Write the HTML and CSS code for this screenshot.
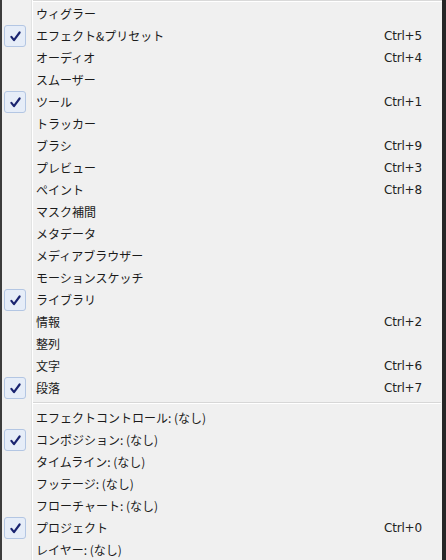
FILE: index.html
```html
<!DOCTYPE html>
<html lang="ja">
<head>
<meta charset="utf-8">
<title>ウィンドウ</title>
<link rel="stylesheet" href="styles.css">
</head>
<body>
<div class="menu">
  <div class="topline"></div>
  <div class="item"><span class="gut"></span><span class="label">ウィグラー</span><span class="key"></span></div>
  <div class="item checked"><span class="gut"><span class="chk"><svg viewBox="0 0 12 12"><path d="M2.2 6.3 L4.6 9.3 L9.8 2.3" /></svg></span></span><span class="label">エフェクト&amp;プリセット</span><span class="key">Ctrl+5</span></div>
  <div class="item"><span class="gut"></span><span class="label">オーディオ</span><span class="key">Ctrl+4</span></div>
  <div class="item"><span class="gut"></span><span class="label">スムーザー</span><span class="key"></span></div>
  <div class="item checked"><span class="gut"><span class="chk"><svg viewBox="0 0 12 12"><path d="M2.2 6.3 L4.6 9.3 L9.8 2.3" /></svg></span></span><span class="label">ツール</span><span class="key">Ctrl+1</span></div>
  <div class="item"><span class="gut"></span><span class="label">トラッカー</span><span class="key"></span></div>
  <div class="item"><span class="gut"></span><span class="label">ブラシ</span><span class="key">Ctrl+9</span></div>
  <div class="item"><span class="gut"></span><span class="label">プレビュー</span><span class="key">Ctrl+3</span></div>
  <div class="item"><span class="gut"></span><span class="label">ペイント</span><span class="key">Ctrl+8</span></div>
  <div class="item"><span class="gut"></span><span class="label">マスク補間</span><span class="key"></span></div>
  <div class="item"><span class="gut"></span><span class="label">メタデータ</span><span class="key"></span></div>
  <div class="item"><span class="gut"></span><span class="label">メディアブラウザー</span><span class="key"></span></div>
  <div class="item"><span class="gut"></span><span class="label">モーションスケッチ</span><span class="key"></span></div>
  <div class="item checked"><span class="gut"><span class="chk"><svg viewBox="0 0 12 12"><path d="M2.2 6.3 L4.6 9.3 L9.8 2.3" /></svg></span></span><span class="label">ライブラリ</span><span class="key"></span></div>
  <div class="item"><span class="gut"></span><span class="label">情報</span><span class="key">Ctrl+2</span></div>
  <div class="item"><span class="gut"></span><span class="label">整列</span><span class="key"></span></div>
  <div class="item"><span class="gut"></span><span class="label">文字</span><span class="key">Ctrl+6</span></div>
  <div class="item checked"><span class="gut"><span class="chk"><svg viewBox="0 0 12 12"><path d="M2.2 6.3 L4.6 9.3 L9.8 2.3" /></svg></span></span><span class="label">段落</span><span class="key">Ctrl+7</span></div>
  <div class="sep"></div>
  <div class="item"><span class="gut"></span><span class="label">エフェクトコントロール: (なし)</span><span class="key"></span></div>
  <div class="item checked"><span class="gut"><span class="chk"><svg viewBox="0 0 12 12"><path d="M2.2 6.3 L4.6 9.3 L9.8 2.3" /></svg></span></span><span class="label">コンポジション: (なし)</span><span class="key"></span></div>
  <div class="item"><span class="gut"></span><span class="label">タイムライン: (なし)</span><span class="key"></span></div>
  <div class="item"><span class="gut"></span><span class="label">フッテージ: (なし)</span><span class="key"></span></div>
  <div class="item"><span class="gut"></span><span class="label">フローチャート: (なし)</span><span class="key"></span></div>
  <div class="item checked"><span class="gut"><span class="chk"><svg viewBox="0 0 12 12"><path d="M2.2 6.3 L4.6 9.3 L9.8 2.3" /></svg></span></span><span class="label">プロジェクト</span><span class="key">Ctrl+0</span></div>
  <div class="item"><span class="gut"></span><span class="label">レイヤー: (なし)</span><span class="key"></span></div>
</div>
</body>
</html>
```
FILE: styles.css
```css
html, body {
  margin: 0;
  padding: 0;
  background: #2a2a2a;
}
.menu {
  width: 440px;
  height: 560px;
  border-left: 2px solid #3c3c3c;
  border-right: 4px solid #262626;
  background-color: #f0f0f0;
  background-image: linear-gradient(to right, transparent 29px, #e2e3e3 29px, #e2e3e3 30px, #ffffff 30px, #ffffff 31px, transparent 31px);
  font-family: "Noto Sans CJK JP", "Noto Sans", sans-serif;
  font-size: 12px;
  color: #1b1b1b;
  overflow: hidden;
}
.topline {
  height: 1px;
  margin-left: 31px;
  border-top: 1px solid #d9d9d9;
  background: #ffffff;
  margin-bottom: 1px;
}
.item {
  display: grid;
  grid-template-columns: 29px 1fr 58px;
  align-items: center;
  height: 22px;
}
.gut {
  display: flex;
  align-items: center;
  height: 22px;
}
.chk {
  box-sizing: border-box;
  width: 22px;
  height: 22px;
  margin-left: 2px;
  border: 1px solid #b3c6e3;
  border-radius: 3px;
  background: #e6edf8;
  display: flex;
  align-items: center;
  justify-content: center;
}
.chk svg {
  width: 13px;
  height: 13px;
}
.chk path {
  fill: none;
  stroke: #1a2470;
  stroke-width: 2;
  stroke-linecap: round;
  stroke-linejoin: round;
}
.label {
  padding-left: 5px;
  white-space: nowrap;
  line-height: 22px;
}
.key {
  font-family: "DejaVu Sans", "Liberation Sans", sans-serif;
  font-size: 12px;
  letter-spacing: -0.2px;
  line-height: 22px;
  white-space: nowrap;
  color: #222222;
}
.sep {
  height: 8px;
  display: flex;
  flex-direction: column;
  justify-content: center;
  margin-left: 31px;
  margin-right: 1px;
}
.sep::before {
  content: "";
  display: block;
  height: 1px;
  background: #d7d7d7;
}
.sep::after {
  content: "";
  display: block;
  height: 1px;
  background: #ffffff;
}
```
